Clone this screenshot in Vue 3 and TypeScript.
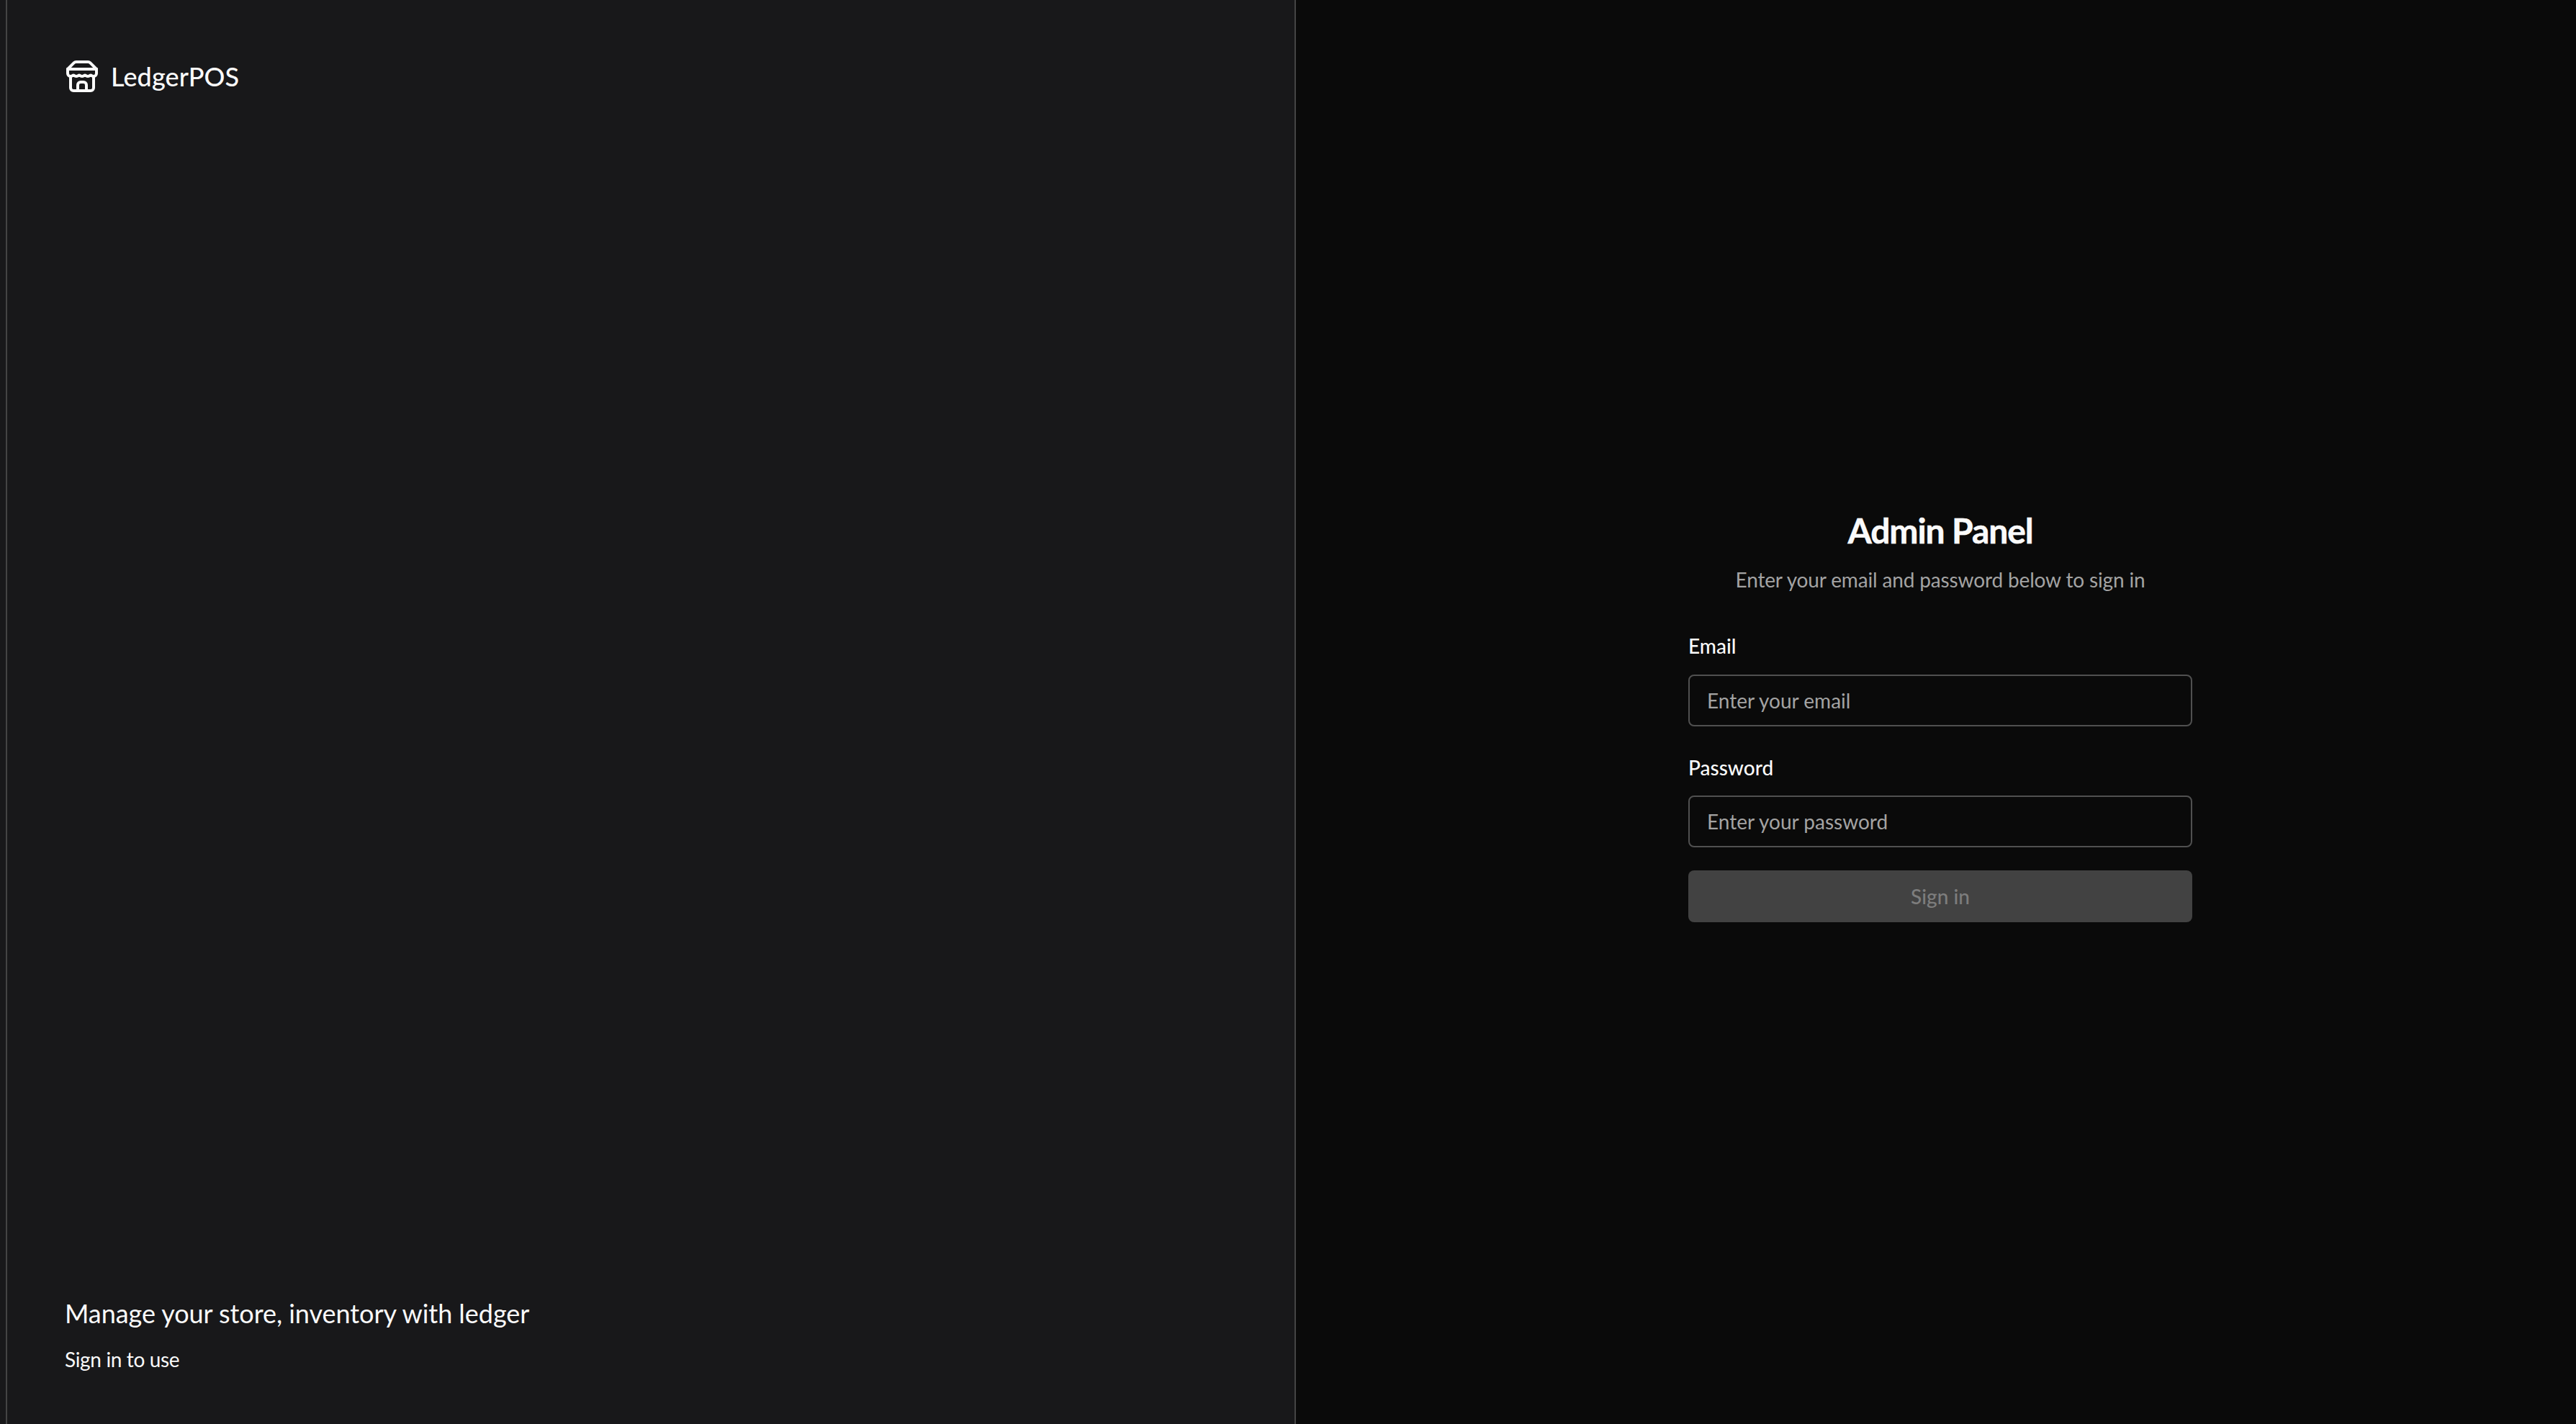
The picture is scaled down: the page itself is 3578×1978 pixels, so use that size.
<script setup lang="ts">
const email = ''
const password = ''
</script>

<template>
  <div class="page">
    <aside class="brand">
      <div class="logo">
        <svg class="logo-icon" viewBox="0 0 24 24" fill="none" stroke="currentColor" stroke-width="2" stroke-linecap="round" stroke-linejoin="round">
          <path d="m2 7 4.41-4.41A2 2 0 0 1 7.83 2h8.34a2 2 0 0 1 1.42.59L22 7" />
          <path d="M4 12v8a2 2 0 0 0 2 2h12a2 2 0 0 0 2-2v-8" />
          <path d="M15 22v-4a2 2 0 0 0-2-2h-2a2 2 0 0 0-2 2v4" />
          <path d="M2 7h20" />
          <path d="M22 7v3a2 2 0 0 1-2 2a2.7 2.7 0 0 1-1.59-.63.7.7 0 0 0-.82 0A2.7 2.7 0 0 1 16 12a2.7 2.7 0 0 1-1.59-.63.7.7 0 0 0-.82 0A2.7 2.7 0 0 1 12 12a2.7 2.7 0 0 1-1.59-.63.7.7 0 0 0-.82 0A2.7 2.7 0 0 1 8 12a2.7 2.7 0 0 1-1.59-.63.7.7 0 0 0-.82 0A2.7 2.7 0 0 1 4 12a2 2 0 0 1-2-2V7" />
        </svg>
        <span>LedgerPOS</span>
      </div>
      <div class="quote">
        <p class="quote-main">Manage your store, inventory with ledger</p>
        <p class="quote-sub">Sign in to use</p>
      </div>
    </aside>
    <main class="side">
      <form class="form" @submit.prevent>
        <header class="head">
          <h1>Admin Panel</h1>
          <p>Enter your email and password below to sign in</p>
        </header>
        <div class="field">
          <label for="email">Email</label>
          <input id="email" :value="email" type="email" placeholder="Enter your email" />
        </div>
        <div class="field">
          <label for="password">Password</label>
          <input id="password" :value="password" type="password" placeholder="Enter your password" />
        </div>
        <button type="submit" disabled>Sign in</button>
      </form>
    </main>
  </div>
</template>

<style scoped>
.page {
  display: grid;
  grid-template-columns: 1800px 1790px;
  width: 3578px;
  height: 1978px;
  overflow: hidden;
  background: #0a0a0a;
  font-family: Lato, "Open Sans", sans-serif;
  color: #fafafa;
}
.brand {
  display: flex;
  flex-direction: column;
  justify-content: space-between;
  box-sizing: border-box;
  height: 1978px;
  padding: 78px 80px 70px 90px;
  background: #18181a;
  border-right: 2px solid #444444;
  box-shadow: inset 8px 0 0 #18181a, inset 10px 0 0 #444444;
}
.logo {
  display: flex;
  align-items: center;
  height: 56px;
  font-size: 36px;
  font-weight: 500;
  line-height: 56px;
  letter-spacing: 0.1px;
}
.logo-icon {
  width: 48px;
  height: 48px;
  margin-right: 16px;
}
.quote-main {
  margin: 0 0 16px;
  font-size: 36px;
  line-height: 56px;
  letter-spacing: -0.05px;
}
.quote-sub {
  margin: 0;
  font-size: 28px;
  line-height: 40px;
  letter-spacing: -0.35px;
}
.side {
  display: flex;
  align-items: center;
  justify-content: center;
}
.form {
  display: flex;
  flex-direction: column;
  width: 700px;
}
.head {
  display: flex;
  flex-direction: column;
  gap: 16px;
  padding-top: 8px;
  margin-bottom: 16px;
  text-align: center;
}
.head h1 {
  margin: 0;
  font-size: 48px;
  font-weight: 700;
  line-height: 64px;
  letter-spacing: -1.1px;
  -webkit-text-stroke: 0.5px #fafafa;
}
.head p {
  margin: 0;
  font-size: 28px;
  line-height: 40px;
  letter-spacing: -0.15px;
  color: #a3a3a3;
}
.field {
  margin-bottom: 32px;
  padding-top: 42px;
}
.field + .field {
  padding-top: 11px;
}
.field label {
  display: block;
  margin-bottom: 25px;
  font-size: 28px;
  font-weight: 500;
  line-height: 28px;
}
.field:first-of-type label {
  margin-bottom: 26px;
}
.field input {
  display: block;
  box-sizing: border-box;
  width: 100%;
  height: 72px;
  padding: 0 24px;
  background: transparent;
  border: 2px solid #505050;
  border-radius: 8px;
  outline: none;
  font-family: inherit;
  font-size: 28px;
  color: #fafafa;
}
.field input::placeholder {
  color: #a3a3a3;
  opacity: 1;
}
button {
  height: 72px;
  padding: 0;
  background: #424242;
  border: none;
  border-radius: 8px;
  font-family: inherit;
  font-size: 28px;
  font-weight: 500;
  color: #7d7d7d;
}
</style>

<style>
html,
body {
  margin: 0;
  background: #0a0a0a;
}
</style>
